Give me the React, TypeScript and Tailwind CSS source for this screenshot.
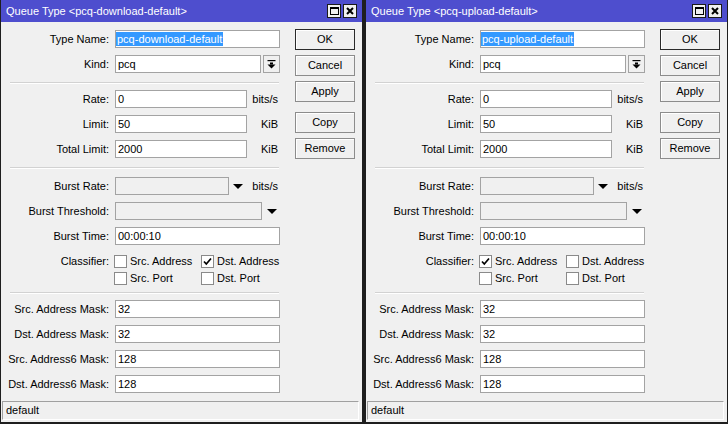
import React from "react";

type Kids = { children?: React.ReactNode };

function Field({ className = "", disabled = false, children }: Kids & { className?: string; disabled?: boolean }) {
  return (
    <div
      className={`h-[18px] shrink-0 border border-[#a3a3a3] flex items-center overflow-hidden whitespace-nowrap ${
        disabled ? "bg-[#f0f0f0]" : "bg-white"
      } ${className}`}
    >
      {children}
    </div>
  );
}

function Row({ label, className = "", children }: Kids & { label: string; className?: string }) {
  return (
    <div className={`flex items-center h-[18px] ${className}`}>
      <div className="w-[108px] shrink-0 text-right whitespace-nowrap">{label}</div>
      <div className="ml-[6px] flex items-center flex-1">{children}</div>
    </div>
  );
}

function Divider({ className = "" }: { className?: string }) {
  return <div className={`ml-[9px] w-[269px] h-[2px] border-t border-[#d2d2d2] border-b border-b-white ${className}`} />;
}

function Arrow() {
  return (
    <svg width="10" height="5" viewBox="0 0 10 5" className="shrink-0">
      <polygon points="0,0 10,0 5,5" fill="#000" />
    </svg>
  );
}

function Check({ checked, label }: { checked: boolean; label: string }) {
  return (
    <div className="w-[87px] flex items-center shrink-0">
      <div className="w-[13px] h-[13px] shrink-0 border border-[#8a8a8a] bg-white flex items-center justify-center">
        {checked && (
          <svg width="11" height="11" viewBox="0 0 11 11">
            <path d="M2 5.5 L4.3 8 L9 2.5" stroke="#000" strokeWidth="1.7" fill="none" />
          </svg>
        )}
      </div>
      <span className="ml-[3px] whitespace-nowrap">{label}</span>
    </div>
  );
}

function Btn({ label, primary = false, className = "" }: { label: string; primary?: boolean; className?: string }) {
  return (
    <div
      className={`w-[60px] h-[21px] flex items-center justify-center bg-[#f0f0f0] border ${
        primary ? "border-[#2a2a2a]" : "border-[#8c8c8c]"
      } shadow-[inset_1px_1px_0_#ffffff] ${className}`}
    >
      {label}
    </div>
  );
}

function Window({
  title,
  typeName,
  srcAddr,
  dstAddr,
}: {
  title: string;
  typeName: string;
  srcAddr: boolean;
  dstAddr: boolean;
}) {
  return (
    <div className="w-[365px] h-[424px] shrink-0 border-l border-r-[3px] border-b-2 border-[#1e1e1e] bg-[#f0f0f0] flex flex-col">
      <div className="h-[22px] shrink-0 bg-[#4e4ece] text-white flex items-center pl-[5px] pr-[5px]">
        <span className="whitespace-nowrap">{title}</span>
        <div className="ml-auto flex items-center gap-[2px]">
          <div className="w-[14px] h-[14px] bg-[#f0f0f0] border border-[#1a1a1a] flex items-center justify-center">
            <div className="w-[9px] h-[8px] border border-black border-t-2" />
          </div>
          <div className="w-[14px] h-[14px] bg-[#f0f0f0] border border-[#1a1a1a] flex items-center justify-center">
            <svg width="8" height="8" viewBox="0 0 8 8">
              <path d="M1 1 L7 7 M7 1 L1 7" stroke="#000" strokeWidth="2" />
            </svg>
          </div>
        </div>
      </div>

      <div className="flex">
        <div className="w-[279px] shrink-0 flex flex-col pt-[8px]">
          <Row label="Type Name:">
            <Field className="w-[165px]">
              <span className="bg-[#3399ff] text-white px-[1px] leading-[14px]">{typeName}</span>
            </Field>
          </Row>
          <Row label="Kind:" className="mt-[7px]">
            <Field className="w-[146px] pl-[2px]">pcq</Field>
            <div className="ml-[2px] w-[17px] h-[18px] border border-[#a3a3a3] bg-[#f0f0f0] flex items-center justify-center">
              <svg width="9" height="9" viewBox="0 0 9 9">
                <rect x="0.5" y="0" width="8" height="1.2" fill="#000" />
                <rect x="3" y="2.5" width="3" height="2" fill="#000" />
                <polygon points="0.5,4.5 8.5,4.5 4.5,8.5" fill="#000" />
              </svg>
            </div>
          </Row>
          <Divider className="mt-[9px]" />
          <Row label="Rate:" className="mt-[6px]">
            <Field className="w-[132px] pl-[2px]">0</Field>
            <span className="flex-1 text-right pr-[2px]">bits/s</span>
          </Row>
          <Row label="Limit:" className="mt-[7px]">
            <Field className="w-[132px] pl-[2px]">50</Field>
            <span className="flex-1 text-right pr-[2px]">KiB</span>
          </Row>
          <Row label="Total Limit:" className="mt-[7px]">
            <Field className="w-[132px] pl-[2px]">2000</Field>
            <span className="flex-1 text-right pr-[2px]">KiB</span>
          </Row>
          <Divider className="mt-[9px]" />
          <Row label="Burst Rate:" className="mt-[8px]">
            <Field disabled className="w-[114px]" />
            <div className="ml-[4px]">
              <Arrow />
            </div>
            <span className="flex-1 text-right pr-[2px]">bits/s</span>
          </Row>
          <Row label="Burst Threshold:" className="mt-[7px]">
            <Field disabled className="w-[147px]" />
            <div className="ml-[5px]">
              <Arrow />
            </div>
          </Row>
          <Row label="Burst Time:" className="mt-[7px]">
            <Field className="w-[165px] pl-[2px]">00:00:10</Field>
          </Row>
          <div className="mt-[10px] flex items-center h-[13px]">
            <div className="w-[108px] shrink-0 text-right">Classifier:</div>
            <div className="ml-[5px] flex">
              <Check checked={srcAddr} label="Src. Address" />
              <Check checked={dstAddr} label="Dst. Address" />
            </div>
          </div>
          <div className="mt-[4px] flex items-center h-[13px]">
            <div className="w-[108px] shrink-0" />
            <div className="ml-[5px] flex">
              <Check checked={false} label="Src. Port" />
              <Check checked={false} label="Dst. Port" />
            </div>
          </div>
          <Divider className="mt-[7px]" />
          <Row label="Src. Address Mask:" className="mt-[6px]">
            <Field className="w-[165px] pl-[2px]">32</Field>
          </Row>
          <Row label="Dst. Address Mask:" className="mt-[7px]">
            <Field className="w-[165px] pl-[2px]">32</Field>
          </Row>
          <Row label="Src. Address6 Mask:" className="mt-[7px]">
            <Field className="w-[165px] pl-[2px]">128</Field>
          </Row>
          <Row label="Dst. Address6 Mask:" className="mt-[7px]">
            <Field className="w-[165px] pl-[2px]">128</Field>
          </Row>
        </div>
        <div className="ml-[15px] pt-[7px] flex flex-col">
          <Btn label="OK" primary />
          <Btn label="Cancel" className="mt-[5px]" />
          <Btn label="Apply" className="mt-[5px]" />
          <Btn label="Copy" className="mt-[10px]" />
          <Btn label="Remove" className="mt-[5px]" />
        </div>
      </div>

      <div className="mt-[8px] ml-[1px] w-[357px] h-[19px] border-t border-l border-[#a0a0a0] border-b border-b-white border-r border-r-white flex items-center pl-[3px]">
        default
      </div>
    </div>
  );
}

export default function App() {
  return (
    <div className="w-[728px] h-[424px] flex bg-[#1e1e1e] overflow-hidden text-[11px] text-black font-['Liberation_Sans',Arial,sans-serif]">
      <Window title="Queue Type <pcq-download-default>" typeName="pcq-download-default" srcAddr={false} dstAddr={true} />
      <Window title="Queue Type <pcq-upload-default>" typeName="pcq-upload-default" srcAddr={true} dstAddr={false} />
    </div>
  );
}
